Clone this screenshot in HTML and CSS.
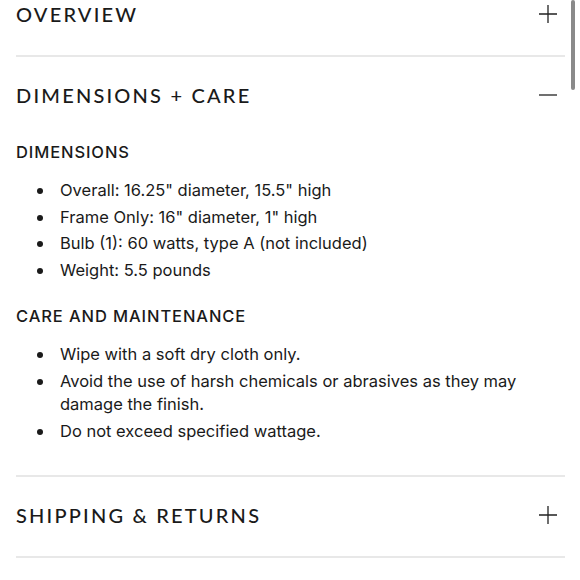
FILE: index.html
```html
<!DOCTYPE html>
<html lang="en">
<head>
<meta charset="utf-8">
<title>Product details</title>
<link rel="stylesheet" href="styles.css">
</head>
<body>
<div class="scrollbar"></div>
<main class="accordion">
  <section class="panel">
    <div class="panel-head">
      <h2 class="panel-title">OVERVIEW</h2>
      <svg class="toggle" width="18" height="18" viewBox="0 0 18 18"><path d="M9 0v18M0 9h18" stroke="#222" stroke-width="1.3" fill="none"/></svg>
    </div>
  </section>
  <section class="panel">
    <div class="panel-head">
      <h2 class="panel-title">DIMENSIONS + CARE</h2>
      <svg class="toggle" width="18" height="18" viewBox="0 0 18 18"><path d="M0 9h18" stroke="#222" stroke-width="1.3" fill="none"/></svg>
    </div>
    <div class="panel-body">
      <h3 class="sub">DIMENSIONS</h3>
      <ul class="list">
        <li>Overall: 16.25" diameter, 15.5" high</li>
        <li>Frame Only: 16" diameter, 1" high</li>
        <li>Bulb (1): 60 watts, type A (not included)</li>
        <li>Weight: 5.5 pounds</li>
      </ul>
      <h3 class="sub">CARE AND MAINTENANCE</h3>
      <ul class="list">
        <li>Wipe with a soft dry cloth only.</li>
        <li>Avoid the use of harsh chemicals or abrasives as they may damage the finish.</li>
        <li>Do not exceed specified wattage.</li>
      </ul>
    </div>
  </section>
  <section class="panel">
    <div class="panel-head">
      <h2 class="panel-title">SHIPPING &amp; RETURNS</h2>
      <svg class="toggle" width="18" height="18" viewBox="0 0 18 18"><path d="M9 0v18M0 9h18" stroke="#222" stroke-width="1.3" fill="none"/></svg>
    </div>
  </section>
</main>
</body>
</html>
```
FILE: styles.css
```css
html, body {
  margin: 0;
  padding: 0;
  background: #fff;
}
body {
  font-family: Inter, "Noto Sans", sans-serif;
  color: #1a1a1a;
  overflow: hidden;
}
.accordion {
  margin: -24px 15px 0 16px;
}
.panel {
  border-bottom: 2px solid #e8e8e8;
}
.panel-head {
  height: 79px;
  display: flex;
  align-items: center;
  justify-content: space-between;
  padding-right: 8px;
  box-sizing: border-box;
  padding-bottom: 3px;
}
.panel-title {
  margin: 0;
  font-family: Lato, "Noto Sans", sans-serif;
  font-size: 20px;
  font-weight: 500;
  letter-spacing: 2.2px;
  line-height: 24px;
}
.toggle {
  display: block;
}
.panel-body {
  padding: 4px 0 32px;
}
.sub {
  margin: 0;
  font-size: 16.5px;
  font-weight: 500;
  letter-spacing: 0.9px;
  line-height: 24px;
}
.list {
  list-style: none;
  margin: 15px 0 22px;
  padding: 0 0 0 44px;
}
.list:last-child {
  margin-bottom: 0;
}
.list li {
  position: relative;
  font-size: 16.5px;
  line-height: 23.5px;
  margin-bottom: 3px;
}
.list li:last-child {
  margin-bottom: 0;
}
.list li::before {
  content: "";
  position: absolute;
  left: -23px;
  top: 9px;
  width: 6px;
  height: 6px;
  border-radius: 50%;
  background: #1a1a1a;
}
.scrollbar {
  position: fixed;
  top: 0;
  right: 5px;
  width: 4px;
  height: 90px;
  border-radius: 2px;
  background: #8a8a8a;
}
```
